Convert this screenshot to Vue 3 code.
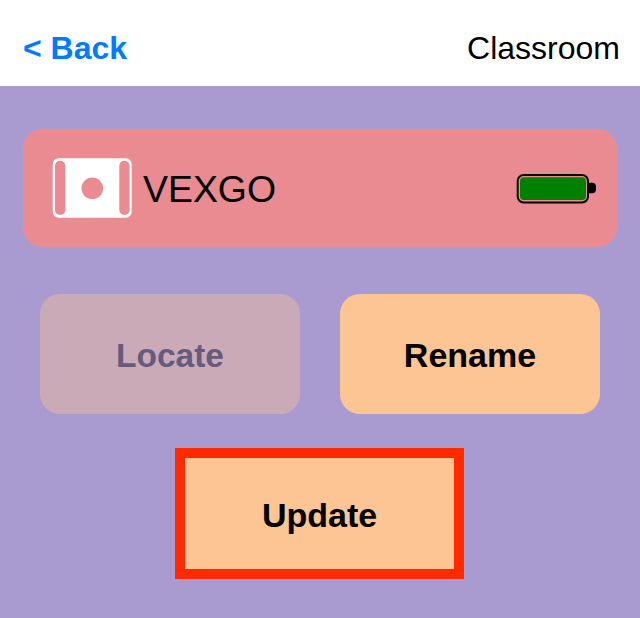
<script setup>
const title = "Classroom"
</script>

<template>
  <div class="screen">
    <header class="topbar">
      <span class="back">&lt; Back</span>
      <span class="title">{{ title }}</span>
    </header>

    <main class="content">
      <section class="robot-card">
        <div class="robot-name">
          <svg class="robot-icon" width="80" height="60" viewBox="0 0 80 60">
            <rect x="0.7" y="0.3" width="79" height="59.4" rx="6" fill="#fff" />
            <rect x="3" y="2.7" width="10.3" height="54.3" rx="5.1" fill="#e98b90" />
            <rect x="67.3" y="2.7" width="10.3" height="54.3" rx="5.1" fill="#e98b90" />
            <circle cx="40.3" cy="30.3" r="10.8" fill="#e98b90" />
          </svg>
          <span>VEXGO</span>
        </div>
        <svg class="battery" width="81" height="32" viewBox="0 0 81 32">
          <rect x="1.7" y="3" width="70.3" height="27.5" rx="6" fill="none" stroke="#000" stroke-width="2" />
          <rect x="4" y="5.3" width="66" height="22.7" rx="4" fill="#008000" />
          <path d="M73 10.7h3a4 4 0 0 1 4 4v2.600a4 4 0 0 1-4 4h-3z" fill="#000" />
        </svg>
      </section>

      <div class="actions">
        <button class="btn disabled">Locate</button>
        <button class="btn">Rename</button>
      </div>

      <button class="btn update">Update</button>
    </main>
  </div>
</template>

<style scoped>
.screen {
  width: 640px;
  height: 618px;
  display: flex;
  flex-direction: column;
  background: #a99ad0;
  font-family: "Liberation Sans", Arial, sans-serif;
  color: #000;
}

.topbar {
  height: 86px;
  background: #fff;
  display: flex;
  justify-content: space-between;
  align-items: center;
  padding: 10px 20px 0 23px;
  box-sizing: border-box;
  font-size: 32px;
}

.back {
  color: #007aff;
  font-weight: bold;
}

.content {
  display: flex;
  flex-direction: column;
  align-items: center;
  padding-top: 43px;
}

.robot-card {
  width: 594px;
  height: 118px;
  box-sizing: border-box;
  background: #e98b90;
  border-radius: 20px;
  display: flex;
  justify-content: space-between;
  align-items: center;
  padding: 0 20px 0 29px;
}

.robot-name {
  display: flex;
  align-items: center;
  gap: 11px;
  font-size: 37.4px;
}

.robot-name span {
  padding-top: 2px;
}

.robot-icon,
.battery {
  display: block;
}

.actions {
  display: flex;
  gap: 40px;
  margin-top: 47px;
}

.btn {
  width: 260px;
  height: 120px;
  border: none;
  border-radius: 20px;
  background: #fdc494;
  color: #000;
  font-family: inherit;
  font-size: 34px;
  font-weight: bold;
  padding: 3px 0 0;
}

.btn.disabled {
  background: #cbaab8;
  color: #655a80;
  font-size: 33.5px;
}

.btn.update {
  width: 289px;
  height: 131px;
  margin: 34px 1px 0 0;
  border: 10px solid #ff2a00;
  border-radius: 0;
}
</style>
